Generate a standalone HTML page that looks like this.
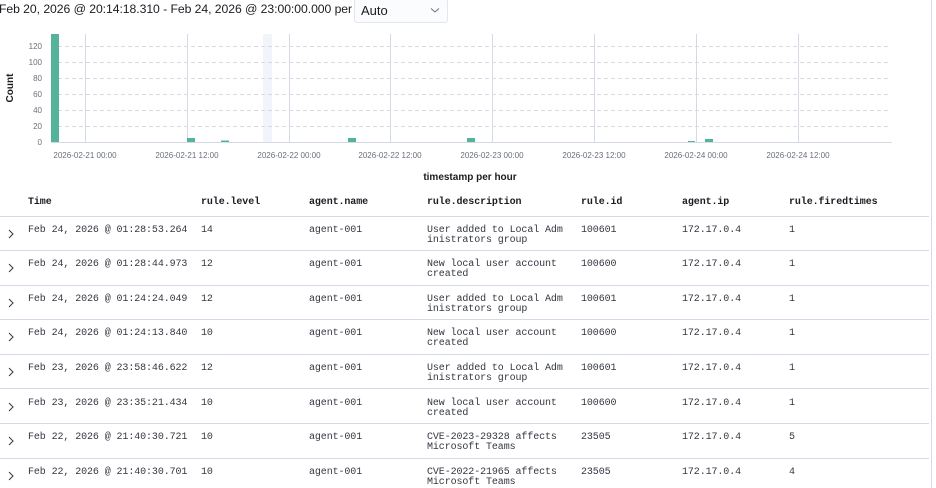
<!DOCTYPE html>
<html><head><meta charset="utf-8"><style>
*{margin:0;padding:0;box-sizing:border-box}
body{width:936px;height:488px;background:#fff;position:relative;overflow:hidden;font-family:"Liberation Sans",sans-serif;color:#343741}
.a{position:absolute;white-space:nowrap}
.m{font-family:"Liberation Mono",monospace;font-size:10px;color:#343741;line-height:10px;letter-spacing:-0.1px}
.h{font-weight:bold;color:#1a1c21}
.sep{position:absolute;left:0;width:929px;height:1px;background:#d3dae6}
.chev{position:absolute;left:7px;width:8px;height:12px}
</style></head><body>
<div class="a" style="left:354px;top:-1px;width:94px;height:24px;border:1px solid #e3e6ec;border-radius:3px;background:#fbfcfd"></div>
<div class="a" style="left:-1px;top:2px;font-size:12.2px;letter-spacing:-0.05px;color:#1a1c21">Feb 20, 2026 @ 20:14:18.310 - Feb 24, 2026 @ 23:00:00.000 per</div>
<div class="a" style="left:361px;top:3px;font-size:13px;color:#1a1c21">Auto</div>
<svg class="a" style="left:430px;top:7px" width="10" height="7"><path d="M1 1.5 L5 5 L9 1.5" fill="none" stroke="#69707d" stroke-width="1"/></svg>
<div style="position:absolute;left:931px;top:0;width:1px;height:488px;background:#d3dae6"></div>

<svg class="a" style="left:0;top:0" width="936" height="190" font-family="Liberation Sans" font-size="8" fill="#69707d">
<rect x="263" y="34" width="9" height="108" fill="#f1f4fa"/>
<g stroke="#d3dae6" stroke-dasharray="4,3" stroke-width="1">
<line x1="51" y1="46.5" x2="891" y2="46.5"/><line x1="51" y1="62.5" x2="891" y2="62.5"/><line x1="51" y1="78.5" x2="891" y2="78.5"/><line x1="51" y1="94.5" x2="891" y2="94.5"/><line x1="51" y1="110.5" x2="891" y2="110.5"/><line x1="51" y1="126.5" x2="891" y2="126.5"/>
</g>
<g stroke="#d3dae6" stroke-width="1">
<line x1="85.5" y1="34" x2="85.5" y2="142"/><line x1="187.5" y1="34" x2="187.5" y2="142"/><line x1="289.5" y1="34" x2="289.5" y2="142"/><line x1="390.5" y1="34" x2="390.5" y2="142"/><line x1="492.5" y1="34" x2="492.5" y2="142"/><line x1="594.5" y1="34" x2="594.5" y2="142"/><line x1="696.5" y1="34" x2="696.5" y2="142"/><line x1="798.5" y1="34" x2="798.5" y2="142"/>
<line x1="51" y1="142.5" x2="892" y2="142.5"/>
</g>
<g fill="#54b399">
<rect x="51" y="34" width="8" height="108"/>
<rect x="187" y="138" width="8" height="4"/><rect x="221" y="140.5" width="8" height="1.5"/>
<rect x="348" y="138" width="8" height="4"/><rect x="467" y="138" width="8" height="4"/>
<rect x="688" y="141" width="7" height="1"/><rect x="705" y="139" width="8" height="3"/>
</g>
<g text-anchor="end">
<text x="42" y="49">120</text><text x="42" y="65">100</text><text x="42" y="81">80</text><text x="42" y="97">60</text><text x="42" y="113">40</text><text x="42" y="129">20</text><text x="42" y="145">0</text>
</g>
<g text-anchor="middle">
<text x="85" y="158">2026-02-21 00:00</text><text x="187" y="158">2026-02-21 12:00</text><text x="289" y="158">2026-02-22 00:00</text><text x="390" y="158">2026-02-22 12:00</text><text x="492" y="158">2026-02-23 00:00</text><text x="594" y="158">2026-02-23 12:00</text><text x="696" y="158">2026-02-24 00:00</text><text x="798" y="158">2026-02-24 12:00</text>
<text x="470" y="180" font-size="10" font-weight="bold" fill="#1a1c21">timestamp per hour</text>
<text transform="translate(13,88) rotate(-90)" font-size="10" font-weight="bold" fill="#1a1c21">Count</text>
</g>
</svg>

<div class="a m h" style="left:28px;top:198px">Time</div>
<div class="a m h" style="left:201px;top:198px">rule.level</div>
<div class="a m h" style="left:309px;top:198px">agent.name</div>
<div class="a m h" style="left:427px;top:198px">rule.description</div>
<div class="a m h" style="left:581px;top:198px">rule.id</div>
<div class="a m h" style="left:682px;top:198px">agent.ip</div>
<div class="a m h" style="left:789px;top:198px">rule.firedtimes</div>
<div class="sep" style="top:216px"></div>

<div id="rows"></div>
<script>
var d=[["Feb 24, 2026 @ 01:28:53.264","14","User added to Local Adm<br>inistrators group","100601","1"],
["Feb 24, 2026 @ 01:28:44.973","12","New local user account<br>created","100600","1"],
["Feb 24, 2026 @ 01:24:24.049","12","User added to Local Adm<br>inistrators group","100601","1"],
["Feb 24, 2026 @ 01:24:13.840","10","New local user account<br>created","100600","1"],
["Feb 23, 2026 @ 23:58:46.622","12","User added to Local Adm<br>inistrators group","100601","1"],
["Feb 23, 2026 @ 23:35:21.434","10","New local user account<br>created","100600","1"],
["Feb 22, 2026 @ 21:40:30.721","10","CVE-2023-29328 affects<br>Microsoft Teams","23505","5"],
["Feb 22, 2026 @ 21:40:30.701","10","CVE-2022-21965 affects<br>Microsoft Teams","23505","4"]];
var h="";
for(var i=0;i<d.length;i++){var t=225.5+i*34.6;var r=d[i];
h+='<svg class="chev" style="top:'+(t+2)+'px" viewBox="0 0 8 12"><path d="M2 2 L6 6 L2 10" fill="none" stroke="#343741" stroke-width="1"/></svg>';
h+='<div class="a m" style="left:28px;top:'+t+'px">'+r[0]+'</div>';
h+='<div class="a m" style="left:201px;top:'+t+'px">'+r[1]+'</div>';
h+='<div class="a m" style="left:309px;top:'+t+'px">agent-001</div>';
h+='<div class="a m" style="left:427px;top:'+t+'px">'+r[2]+'</div>';
h+='<div class="a m" style="left:581px;top:'+t+'px">'+r[3]+'</div>';
h+='<div class="a m" style="left:682px;top:'+t+'px">172.17.0.4</div>';
h+='<div class="a m" style="left:789px;top:'+t+'px">'+r[4]+'</div>';
if(i<7)h+='<div class="sep" style="top:'+Math.round(250+i*34.6)+'px"></div>';}
document.getElementById("rows").innerHTML=h;
</script>
</body></html>
